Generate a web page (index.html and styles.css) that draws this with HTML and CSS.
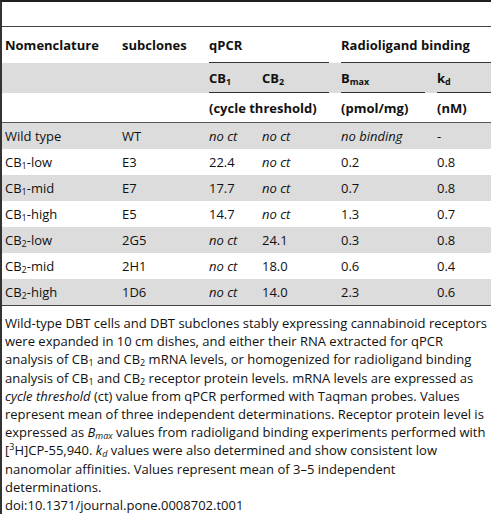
FILE: index.html
```html
<!DOCTYPE html>
<html lang="en">
<head>
    <meta charset="UTF-8">
    <meta name="viewport" content="width=device-width, initial-scale=1.0">
    <title>Table 1</title>
    <link rel="stylesheet" href="styles.css">
</head>
<body>
    <div class="page">
        <div class="table">
            <div class="row head-top">
                <div class="cell">Nomenclature</div>
                <div class="cell">subclones</div>
                <div class="cell span-qpcr ruled">qPCR</div>
                <div class="cell span-binding ruled">Radioligand binding</div>
            </div>
            <div class="row head-mid shaded">
                <div class="cell"></div>
                <div class="cell"></div>
                <div class="cell span-qpcr ruled pair">
                    <span>CB<sub>1</sub></span>
                    <span>CB<sub>2</sub></span>
                </div>
                <div class="cell ruled">B<sub>max</sub></div>
                <div class="cell ruled">k<sub>d</sub></div>
            </div>
            <div class="row head-units">
                <div class="cell"></div>
                <div class="cell"></div>
                <div class="cell span-qpcr">(cycle threshold)</div>
                <div class="cell">(pmol/mg)</div>
                <div class="cell">(nM)</div>
            </div>

            <div class="row data shaded">
                <div class="cell">Wild type</div>
                <div class="cell">WT</div>
                <div class="cell"><i>no ct</i></div>
                <div class="cell"><i>no ct</i></div>
                <div class="cell"><i>no binding</i></div>
                <div class="cell">-</div>
            </div>
            <div class="row data">
                <div class="cell">CB<sub>1</sub>-low</div>
                <div class="cell">E3</div>
                <div class="cell">22.4</div>
                <div class="cell"><i>no ct</i></div>
                <div class="cell">0.2</div>
                <div class="cell">0.8</div>
            </div>
            <div class="row data shaded">
                <div class="cell">CB<sub>1</sub>-mid</div>
                <div class="cell">E7</div>
                <div class="cell">17.7</div>
                <div class="cell"><i>no ct</i></div>
                <div class="cell">0.7</div>
                <div class="cell">0.8</div>
            </div>
            <div class="row data">
                <div class="cell">CB<sub>1</sub>-high</div>
                <div class="cell">E5</div>
                <div class="cell">14.7</div>
                <div class="cell"><i>no ct</i></div>
                <div class="cell">1.3</div>
                <div class="cell">0.7</div>
            </div>
            <div class="row data shaded">
                <div class="cell">CB<sub>2</sub>-low</div>
                <div class="cell">2G5</div>
                <div class="cell"><i>no ct</i></div>
                <div class="cell">24.1</div>
                <div class="cell">0.3</div>
                <div class="cell">0.8</div>
            </div>
            <div class="row data">
                <div class="cell">CB<sub>2</sub>-mid</div>
                <div class="cell">2H1</div>
                <div class="cell"><i>no ct</i></div>
                <div class="cell">18.0</div>
                <div class="cell">0.6</div>
                <div class="cell">0.4</div>
            </div>
            <div class="row data shaded last">
                <div class="cell">CB<sub>2</sub>-high</div>
                <div class="cell">1D6</div>
                <div class="cell"><i>no ct</i></div>
                <div class="cell">14.0</div>
                <div class="cell">2.3</div>
                <div class="cell">0.6</div>
            </div>
        </div>

        <p class="caption">Wild-type DBT cells and DBT subclones stably expressing cannabinoid receptors were expanded in 10 cm dishes, and either their RNA extracted for qPCR analysis of CB<sub>1</sub> and CB<sub>2</sub> mRNA levels, or homogenized for radioligand binding analysis of CB<sub>1</sub> and CB<sub>2</sub> receptor protein levels. mRNA levels are expressed as <i>cycle threshold</i> (ct) value from qPCR performed with Taqman probes. Values represent mean of three independent determinations. Receptor protein level is expressed as <i>B<sub>max</sub></i> values from radioligand binding experiments performed with [<sup>3</sup>H]CP-55,940. <i>k<sub>d</sub></i> values were also determined and show consistent low nanomolar affinities. Values represent mean of 3–5 independent determinations.</p>
        <p class="doi">doi:10.1371/journal.pone.0008702.t001</p>
    </div>
</body>
</html>
```

FILE: styles.css
```css
body {
    margin: 0;
    background-color: white;
}

.page {
    width: 489px;
    min-height: 512px;
    border-left: 2px solid #333;
    border-top: 2px solid #1e1e1e;
    font-family: "Open Sans", "DejaVu Sans", sans-serif;
    font-size: 13px;
    color: #111;
}

.table {
    margin-top: 24px;
    border-top: 1px solid #444;
}

.row {
    display: grid;
    grid-template-columns: 105px 75px 41px 67px 84px 1fr;
    column-gap: 12px;
    padding-left: 3px;
}

.cell {
    line-height: 18px;
    white-space: nowrap;
}

.shaded {
    background-color: #dcdcdc;
}

.head-top,
.head-mid,
.head-units {
    font-weight: bold;
}

.head-top .cell {
    padding: 9px 0 8px;
}

.head-mid .cell {
    padding: 6px 0 5px;
}

.head-units {
    border-bottom: 1px solid #555;
}

.head-units .cell {
    padding: 6px 0 5px;
}

.span-qpcr {
    grid-column: 3 / span 2;
}

.span-binding {
    grid-column: 5 / span 2;
}

.ruled {
    border-bottom: 1px solid #333;
}

.pair {
    display: grid;
    grid-template-columns: 41px 67px;
    column-gap: 12px;
}

.data .cell {
    padding: 4px 0;
}

.data.last {
    border-bottom: 1px solid #444;
}

sub {
    font-size: 9px;
    line-height: 0;
    vertical-align: -2px;
}

sup {
    font-size: 9px;
    line-height: 0;
    vertical-align: 5px;
}

.caption {
    margin: 8px 0 0;
    padding: 0 2px 0 3px;
    line-height: 18.2px;
}

.doi {
    margin: 0;
    padding: 0 0 0 3px;
    line-height: 18.2px;
}
```
